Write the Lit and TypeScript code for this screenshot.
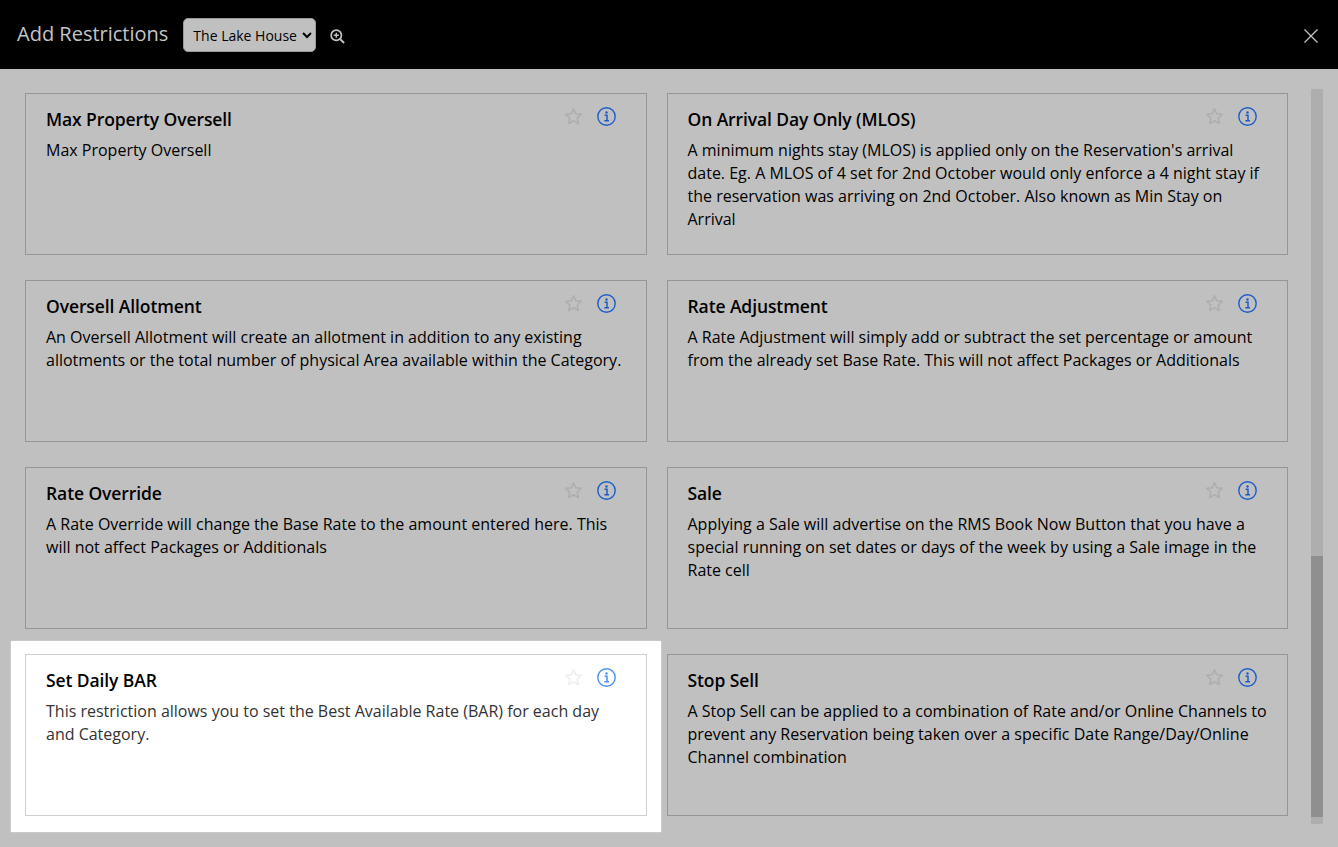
import { LitElement, html, css, svg } from "lit";
import { customElement } from "lit/decorators.js";

const cards = [
  ["Max Property Oversell", "Max Property Oversell"],
  ["On Arrival Day Only (MLOS)", "A minimum nights stay (MLOS) is applied only on the Reservation's arrival date. Eg. A MLOS of 4 set for 2nd October would only enforce a 4 night stay if the reservation was arriving on 2nd October. Also known as Min Stay on Arrival"],
  ["Oversell Allotment", "An Oversell Allotment will create an allotment in addition to any existing allotments or the total number of physical Area available within the Category."],
  ["Rate Adjustment", "A Rate Adjustment will simply add or subtract the set percentage or amount from the already set Base Rate. This will not affect Packages or Additionals"],
  ["Rate Override", "A Rate Override will change the Base Rate to the amount entered here. This will not affect Packages or Additionals"],
  ["Sale", "Applying a Sale will advertise on the RMS Book Now Button that you have a special running on set dates or days of the week by using a Sale image in the Rate cell"],
  ["Set Daily BAR", "This restriction allows you to set the Best Available Rate (BAR) for each day and Category."],
  ["Stop Sell", "A Stop Sell can be applied to a combination of Rate and/or Online Channels to prevent any Reservation being taken over a specific Date Range/Day/Online Channel combination"],
];

const star = svg`<svg class="star" viewBox="0 0 19 19" width="19" height="19"><path d="M9.500 1.800l2.300 5 5.400.6-4 3.700 1.100 5.400-4.800-2.700-4.800 2.700 1.100-5.400-4-3.700 5.400-.6z" fill="none" stroke="currentColor" stroke-width="1.600" stroke-linejoin="round"/></svg>`;
const info = svg`<svg class="info" viewBox="0 0 19 19" width="19" height="19"><circle cx="9.500" cy="9.500" r="8.700" fill="none" stroke="currentColor" stroke-width="1.400"/><circle cx="9.500" cy="5.500" r="1.200" fill="currentColor"/><path d="M7.600 8.300H10V13.200M7.300 13.700H12" fill="none" stroke="currentColor" stroke-width="1.500"/></svg>`;

@customElement("app-root")
export class AppRoot extends LitElement {
  static styles = css`
    :host { display: block; height: 847px; overflow: hidden; background: #c0c0c0; font-family: "Open Sans", sans-serif; color: #000; }
    .head { height: 69px; background: #000; display: flex; align-items: center; padding: 0 20px 0 17px; box-sizing: border-box; }
    .head h1 { margin: 0 15px 1px 0; font-size: 20px; line-height: 28px; font-weight: 400; color: #c4c4c4; }
    select { width: 133px; height: 34px; border: 1px solid #999; border-radius: 5px; background: #c0c0c0; color: #000; font: 14px "Open Sans", sans-serif; padding: 0 0 0 5px; margin-top: 1px; }
    .zoom { margin: 3px 0 0 14px; color: #c4c4c4; display: block; }
    .close { margin: 3px 0 0 auto; color: #c4c4c4; display: block; }
    .main { display: flex; align-items: flex-start; padding: 0 15px 0 25px; }
    .grid { width: 1263px; margin-top: 24px; display: grid; grid-template-columns: 621.5px 621.5px; grid-auto-rows: 162px; column-gap: 20px; row-gap: 25px; }
    .card { position: relative; box-sizing: border-box; border: 1px solid #969696; padding: 12px 18px 0 20px; font-size: 16px; line-height: 23px; }
    .card h2 { margin: 0 0 7px; font-size: 17.5px; line-height: 26px; font-weight: 600; letter-spacing: -0.1px; }
    .card p { margin: 0; }
    .icons { position: absolute; top: 13px; right: 30px; display: flex; gap: 14px; }
    .star { color: #aeaeae; display: block; }
    .info { color: #1a5dc8; display: block; }
    .hl { background: #fff; border-color: #cfcfcf; color: #333; }
    .hl::before { content: ""; position: absolute; z-index: 0; inset: -14px -15px -17px; background: #fff; box-shadow: 0 0 2px #ddd; }
    .hl::after { content: ""; position: absolute; inset: -1px; border: 1px solid #cfcfcf; }
    .hl > * { position: relative; z-index: 1; }
    .hl h2 { color: #000; }
    .hl .icons { position: absolute; }
    .hl .star { color: #efefef; }
    .hl .info { color: #4a90f0; }
    .track { width: 12px; height: 735px; margin: 20px 0 0 23px; background: #aeaeae; display: flex; flex-direction: column; }
    .track-top { height: 467px; }
    .thumb { height: 261px; background: #8f8f8f; }
  `;

  render() {
    return html`
      <div class="head">
        <h1>Add Restrictions</h1>
        <select><option>The Lake House</option></select>
        <svg class="zoom" viewBox="0 0 16 16" width="15" height="15"><circle cx="6.700" cy="6.700" r="5.500" fill="none" stroke="currentColor" stroke-width="1.800"/><path d="M10.800 10.800L15 15" stroke="currentColor" stroke-width="2.200"/><path d="M6.700 4V9.400M4 6.700H9.400" stroke="currentColor" stroke-width="1.500"/></svg>
        <svg class="close" viewBox="0 0 14 14" width="14" height="14"><path d="M0.500 0.500L13.500 13.500M13.500 0.500L0.500 13.500" stroke="currentColor" stroke-width="1.300"/></svg>
      </div>
      <div class="main">
        <div class="grid">
          ${cards.map(([t, d], i) => html`
            <div class="card ${i === 6 ? "hl" : ""}">
              <h2>${t}</h2>
              <p>${d}</p>
              <div class="icons">${star}${info}</div>
            </div>`)}
        </div>
        <div class="track"><div class="track-top"></div><div class="thumb"></div></div>
      </div>
    `;
  }
}
